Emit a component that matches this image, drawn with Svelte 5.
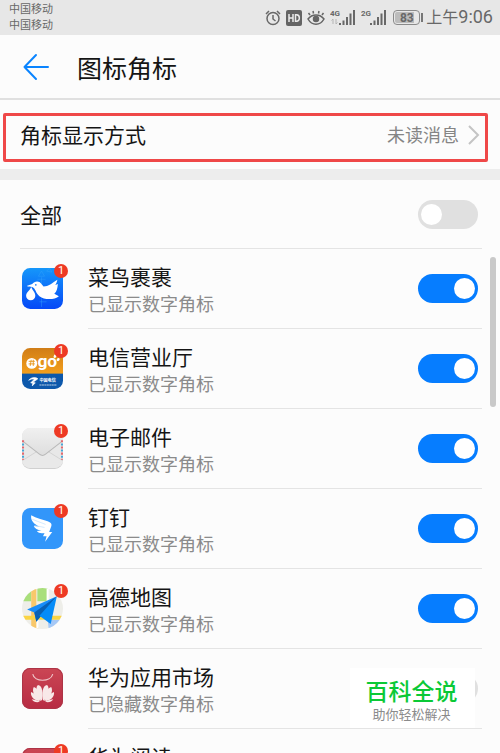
<script>
  let all = $state(false);
  let apps = $state([
    { id: 'cainiao', name: '菜鸟裹裹', on: true, badge: true },
    { id: 'telecom', name: '电信营业厅', on: true, badge: true },
    { id: 'mail', name: '电子邮件', on: true, badge: true },
    { id: 'ding', name: '钉钉', on: true, badge: true },
    { id: 'amap', name: '高德地图', on: true, badge: true },
    { id: 'market', name: '华为应用市场', on: false, badge: false },
    { id: 'reader', name: '华为阅读', on: true, badge: true }
  ]);
</script>

{#snippet signal(label, arrows)}
  <svg class="signal" width="26" height="18" viewBox="0 0 26 18" aria-hidden="true">
    <text x="0" y="7" class="net">{label}</text>
    {#if arrows}
      <path d="M3 10v5M1.500 11.500L3 10M6 10v5M6 15l1.500-1.500" stroke="#b5b5b5" fill="none" />
    {/if}
    <path d="M9 14h2v2H9zM12.500 11.500h2V16h-2zM16 8h2v8h-2zM19.500 4.500h2V16h-2zM23 1h2v15h-2z" fill="#686868" />
  </svg>
{/snippet}

{#snippet icon(id)}
  <svg width="41" height="41" viewBox="0 0 40 40" aria-hidden="true">
    {#if id === 'cainiao'}
      <defs><linearGradient id="g-cn" x1="0" y1="0" x2="0" y2="1"><stop offset="0" stop-color="#1597fa" /><stop offset="1" stop-color="#0548f7" /></linearGradient></defs>
      <rect width="40" height="40" rx="8" fill="url(#g-cn)" />
      <path d="M16 8l3-5 3 5zM24 3l3-3 2 4zM15 11h8M19 9v7M17 33h7M19 30v8" fill="none" stroke="#35a5fb" stroke-width=".8" opacity=".5" />
      <path d="M4.500 17.500L10 15.500C12 12.500 17 12 19 15.500L21 18C26 18 29 15 34.500 11.500C34 14 33.500 15 32.500 16.500L35 15.500C34.500 20 34 23 31.500 25L36 27.500C32 31 22 31.500 17 27.500C13 24 13.500 20 10 18.500C8 18 6.500 18.500 4.500 17.500Z" fill="#fff" />
      <path d="M9 18.500C10 21.500 13 23.500 13 27A4.500 4.500 0 0 1 4 27C4 23.500 8 21.500 9 18.500Z" fill="#fff" />
      <circle cx="13.500" cy="16.500" r=".8" fill="#1179f8" />
    {:else if id === 'telecom'}
      <defs>
        <linearGradient id="g-tc" x1="0" y1="0" x2="0" y2="1"><stop offset="0" stop-color="#d07d17" /><stop offset="1" stop-color="#f5a01c" /></linearGradient>
        <clipPath id="c-tc"><rect width="40" height="40" rx="8" /></clipPath>
      </defs>
      <g clip-path="url(#c-tc)">
        <rect width="40" height="26" fill="url(#g-tc)" />
        <rect y="25" width="40" height="15" fill="#0d58ab" />
      </g>
      <circle cx="9.500" cy="15" r="5.300" fill="#fff" />
      <path d="M6.500 13h6M6.500 15.500h6M8 17.500l1-6M11 17.500v-6" stroke="#e8971d" stroke-width=".9" fill="none" />
      <text x="15" y="19" class="go">go</text>
      <path d="M32 8.500l.5-1M35 11.500l.5-.5" stroke="#fff" stroke-width="2.500" stroke-linecap="round" />
      <path d="M6.500 31.500C9 28.500 13 28 15.500 30C14 31.500 12 32.500 10.500 33.500L13 34L10 37L10.500 34.500L8.500 34L12 30.500C10 30 8.500 30.500 6.500 31.500Z" fill="#fff" stroke="#fff" stroke-width=".6" />
      <text x="17" y="33.500" class="cn">中国电信</text>
      <path d="M17 36h17" stroke="#b8cfe6" stroke-width="1" stroke-dasharray="2 .4" />
    {:else if id === 'mail'}
      <defs><linearGradient id="g-ml" x1="0" y1="0" x2="0" y2="1"><stop offset="0" stop-color="#f0f0f0" /><stop offset="1" stop-color="#dedede" /></linearGradient></defs>
      <rect y=".8" width="40" height="39.200" rx="8" fill="#d0d0d0" />
      <rect width="40" height="39" rx="8" fill="#e8e8e8" />
      <path d="M0 31L17 21h6L40 31A8 8 0 0 1 32 39H8A8 8 0 0 1 0 31Z" fill="#e9e9e9" />
      <path d="M0 32L16 22M40 32L24 22" stroke="#cfcfcf" stroke-width=".8" />
      <path d="M0 8A8 8 0 0 1 8 0H32A8 8 0 0 1 40 8V12L23 25Q20 28 17 25L0 12Z" fill="url(#g-ml)" />
      <path d="M1 13L17 25.500Q20 28 23 25.500L39 13" fill="none" stroke="#b8b8b8" />
      <path d="M1 12v19M39 12v19" stroke="#df6a70" stroke-width="2" stroke-dasharray="2 4" />
      <path d="M1 15v16M39 15v16" stroke="#49a6d5" stroke-width="2" stroke-dasharray="2 4" />
    {:else if id === 'ding'}
      <rect width="40" height="40" rx="8" fill="#3296fa" />
      <path d="M9 7C14 10 20 11 25 13C28 14.200 29.500 15.500 28.500 18L26.500 23.500H29.500L22.500 33L24 27.500H20.500L22 24.500C18 25 16 24.500 14.500 22.500L19 22C15 21.500 12.500 20 11.500 17.500L17 18C12 16 8 12 9 7Z" fill="#fff" />
      <path d="M10 11L23 16M12 17L22 19" stroke="#b9dcfd" stroke-width=".6" />
    {:else if id === 'amap'}
      <defs><clipPath id="c-am"><circle cx="20" cy="20" r="20" /></clipPath></defs>
      <g clip-path="url(#c-am)">
        <rect width="40" height="40" fill="#eeeee9" />
        <path d="M0 0H9V13H0zM15 0H25V13H15z" fill="#a9df7b" />
        <path d="M25 30L32 31H40V40H26z" fill="#a5c8f6" />
        <path d="M9 0h5v27l2 13H9z" fill="#f8c86b" />
        <path d="M0 27L40 27V31L0 31z" fill="#fad443" />
        <path d="M25 0v27M15 31v9" stroke="#fff" stroke-width="2" />
      </g>
      <path d="M34 8L5 21L12 24L14 33z" fill="#168dfa" />
      <path d="M34 8L12 24L14 33L18 28z" fill="#0861b5" />
      <path d="M34 8L17 27L28 35z" fill="#058cf8" />
    {:else}
      <defs><linearGradient id="g-{id}" x1="0" y1="0" x2="0" y2="1"><stop offset="0" stop-color="#cb4654" /><stop offset="1" stop-color="#b72b43" /></linearGradient></defs>
      <rect width="40" height="40" rx="8" fill="url(#g-{id})" />
      <rect x=".500" y=".500" width="39" height="39" rx="7.500" fill="none" stroke="#ad3446" />
      {#if id === 'market'}
        <path d="M10.500 6C12 14 28 14 30 6" fill="none" stroke="#f0c9cc" stroke-width="1.100" />
        <g fill="#f8e8e8">
          <path d="M19.400 32C15 28 12 20 15.500 16.500C20 16.500 21 25 19.400 32Z" />
          <path d="M20.600 32C25 28 28 20 24.500 16.500C20 16.500 19 25 20.600 32Z" />
          <path d="M18.500 32.200C13 29.500 9 23 11.500 18.500C16 20 18 27 18.500 32.200Z" />
          <path d="M21.500 32.200C27 29.500 31 23 28.500 18.500C24 20 22 27 21.500 32.200Z" />
          <path d="M17.500 32.500C12 32 8 28 8.800 23.500C13 25 16 29 17.500 32.500Z" />
          <path d="M22.500 32.500C28 32 32 28 31.200 23.500C27 25 24 29 22.500 32.500Z" />
          <path d="M17.500 33C14 34 11 33 9.500 30.500C13 31 15.500 32 17.500 33Z" />
          <path d="M22.500 33C26 34 29 33 30.500 30.500C27 31 24.500 32 22.500 33Z" />
        </g>
      {/if}
    {/if}
  </svg>
{/snippet}

<div class="screen">
  <div class="status">
    <div class="carriers"><span>中国移动</span><span>中国移动</span></div>
    <div class="indicators">
      <svg width="16" height="18" viewBox="0 0 16 18" fill="none" stroke="#686868" stroke-width="1.500" aria-hidden="true">
        <circle cx="8" cy="9.500" r="6" /><path d="M8 6v4l2.500 2M1 5l3-3M15 5l-3-3" />
      </svg>
      <svg class="hd" width="16" height="16" viewBox="0 0 16 16" aria-hidden="true">
        <rect width="16" height="16" rx="2" fill="#646464" />
        <path d="M3 4v8M7 4v8M3 8h4M9.500 4.700v6.600h1C14.300 11.300 14.300 4.700 10.500 4.700z" fill="none" stroke="#ececec" stroke-width="1.500" />
      </svg>
      <svg class="eye" width="18" height="18" viewBox="0 0 18 18" fill="none" stroke="#646464" stroke-width="1.500" aria-hidden="true">
        <path d="M1 10C5 4.500 13 4.500 17 10C13 17 5 17 1 10zM3 6L1.500 4M6.500 4.500L6 2M11.500 4.500L12 2M15 6l1.500-2" />
        <circle cx="9" cy="10" r="2.500" fill="#646464" />
      </svg>
      {@render signal('4G', true)}
      {@render signal('2G', false)}
      <div class="battery"><span>83</span></div>
      <span class="clock">上午<b>9:06</b></span>
    </div>
  </div>

  <header>
    <button class="back" aria-label="返回">
      <svg width="28" height="28" viewBox="0 0 28 28" fill="none" stroke="#0a84ff" stroke-width="2" stroke-linecap="round" stroke-linejoin="round" aria-hidden="true">
        <path d="M25 14H1.500M13 2L1.500 14L13 26" />
      </svg>
    </button>
    <h1>图标角标</h1>
  </header>

  <div class="mode-wrap">
    <button class="mode">
      <span class="title">角标显示方式</span>
      <span class="value">未读消息</span>
      <svg width="12" height="20" viewBox="0 0 12 20" fill="none" stroke="#c4c4c4" stroke-width="2" aria-hidden="true"><path d="M1 1l9 9l-9 9" /></svg>
    </button>
    <div class="highlight"></div>
  </div>

  <main>
    <div class="all">
      <label class="title" for="sw-all">全部</label>
      <input id="sw-all" type="checkbox" role="switch" bind:checked={all} />
    </div>
    <ul>
      {#each apps as app (app.id)}
        <li>
          <div class="icon">
            {@render icon(app.id)}
            {#if app.badge}<span class="badge">1</span>{/if}
          </div>
          <div class="body">
            <label for="sw-{app.id}">
              <span class="title">{app.name}</span>
              <span class="sub">{app.on ? '已显示数字角标' : '已隐藏数字角标'}</span>
            </label>
            <input id="sw-{app.id}" type="checkbox" role="switch" bind:checked={app.on} />
          </div>
        </li>
      {/each}
    </ul>
    <div class="scrollbar"></div>
  </main>

  <aside><strong>百科全说</strong><span>助你轻松解决</span></aside>
</div>

<style>
  :global(body) { margin: 0; background: #fcfcfc; }
  .screen {
    position: relative;
    display: flex;
    flex-direction: column;
    height: 100vh;
    overflow: hidden;
    background: #fcfcfc;
    color: #151515;
    font-family: Roboto, "Noto Sans CJK SC", sans-serif;
  }
  button { border: 0; padding: 0; background: none; font: inherit; color: inherit; }
  svg { display: block; flex: none; }
  .status {
    flex: none;
    display: flex;
    justify-content: space-between;
    align-items: center;
    height: 35px;
    padding: 0 7px 0 9px;
    background: #e7e7e7;
    color: #686868;
  }
  .carriers { display: flex; flex-direction: column; font-size: 11px; line-height: 16px; }
  .indicators { display: flex; align-items: center; }
  .hd { margin-left: 5px; }
  .eye { margin-left: 5px; }
  .signal { margin-left: 5px; }
  .net { font: 700 8px Roboto, sans-serif; fill: #686868; }
  .go { font: 700 17px Roboto, sans-serif; fill: #fff; }
  .cn { font: 700 4px "Noto Sans CJK SC", sans-serif; fill: #fff; }
  .battery {
    position: relative;
    box-sizing: border-box;
    width: 27px;
    height: 15px;
    margin: 0 6px;
    padding: 1px;
    border: 1px solid #8a8a8a;
    border-radius: 4px;
  }
  .battery span {
    display: block;
    height: 11px;
    border-radius: 2px;
    background: linear-gradient(90deg, #bcbcbc 83%, #e7e7e7 83%);
    font-size: 12px;
    font-weight: 700;
    line-height: 12px;
    text-align: center;
  }
  .battery::after {
    content: "";
    position: absolute;
    top: 2px;
    right: -4px;
    width: 2px;
    height: 9px;
    background: #777;
  }
  .clock { font-size: 16px; line-height: 24px; white-space: nowrap; }
  .clock b { font-size: 18px; font-weight: 400; }
  header {
    flex: none;
    display: flex;
    align-items: center;
    gap: 26px;
    height: 63px;
    padding: 0 23px;
    border-bottom: 2px solid #e0e0e0;
  }
  h1 { margin: 0; padding-top: 6px; font-size: 25px; font-weight: 400; line-height: 36px; }
  .mode-wrap { flex: none; position: relative; border-bottom: 11px solid #ededed; }
  .mode {
    display: flex;
    align-items: center;
    width: 100%;
    height: 69px;
    padding: 0 20px;
    text-align: left;
  }
  .mode .title { flex: 1; }
  .mode svg { margin-left: 9px; }
  .mode span, .all label { padding-top: 3px; }
  .value { font-size: 18px; line-height: 28px; color: #858585; }
  .highlight {
    position: absolute;
    inset: 13px 12px 7px 3px;
    border: 3px solid #ef4848;
    border-radius: 2px;
    pointer-events: none;
  }
  .title { font-size: 21px; line-height: 28px; }
  main { flex: 1; min-height: 0; position: relative; overflow: hidden; }
  .all {
    display: flex;
    align-items: center;
    justify-content: space-between;
    height: 68px;
    margin: 0 18px 0 20px;
    padding-right: 4px;
    border-bottom: 1px solid #e4e4e4;
  }
  ul { list-style: none; margin: 0; padding: 0 18px 0 22px; }
  li { display: flex; align-items: center; gap: 25px; height: 80px; }
  .icon { position: relative; flex: none; padding-bottom: 2px; }
  .badge {
    position: absolute;
    top: -4px;
    right: -5px;
    width: 14px;
    height: 14px;
    border-radius: 50%;
    background: #ee3a24;
    color: #fff;
    font-size: 11px;
    line-height: 14px;
    text-align: center;
  }
  .body {
    flex: 1;
    box-sizing: border-box;
    display: flex;
    align-items: center;
    justify-content: space-between;
    height: 80px;
    padding-right: 4px;
    border-bottom: 1px solid #e4e4e4;
  }
  .body label { display: flex; flex-direction: column; padding-top: 5px; }
  .sub { font-size: 18px; line-height: 26px; color: #8b8b8b; }
  input {
    appearance: none;
    flex: none;
    box-sizing: border-box;
    width: 60px;
    height: 29px;
    margin: 0;
    padding: 3px;
    border-radius: 15px;
    background: #e0e0e0;
    display: flex;
    align-items: center;
  }
  input::before { content: ""; width: 21px; height: 21px; border-radius: 50%; background: #fff; }
  input:checked { background: #067dff; justify-content: flex-end; }
  .scrollbar {
    position: absolute;
    top: 77px;
    right: 4px;
    width: 6px;
    height: 150px;
    border-radius: 3px;
    background: #c9c9c9;
  }
  aside {
    position: absolute;
    right: 25px;
    bottom: 25px;
    display: flex;
    flex-direction: column;
    align-items: center;
    justify-content: center;
    box-sizing: border-box;
    width: 125px;
    height: 60px;
    background: #fff;
    padding: 6px 2px 0 0;
  }
  aside strong { font-size: 23px; font-weight: 500; line-height: 26px; color: #0bc936; }
  aside span { font-size: 13px; line-height: 17px; color: #8b8b8b; }
</style>
